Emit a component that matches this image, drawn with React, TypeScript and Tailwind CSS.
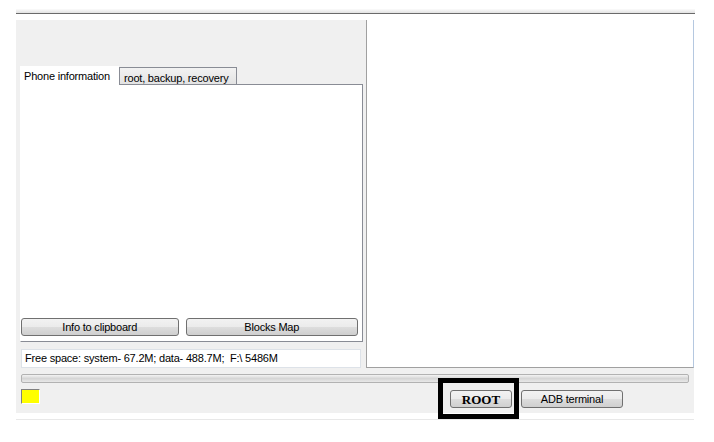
const sans = { fontFamily: '"Liberation Sans", Arial, sans-serif' };

function WinButton({ children, className = "", serif = false }: { children: React.ReactNode; className?: string; serif?: boolean }) {
  return (
    <button
      className={
        "h-[18px] flex items-center justify-center rounded-[3px] border border-[#707070] bg-[linear-gradient(to_bottom,#f2f2f2_0%,#ebebeb_50%,#dddddd_51%,#cfcfcf_100%)] text-black leading-none " +
        className
      }
      style={serif ? { fontFamily: '"Liberation Serif", "Times New Roman", serif' } : sans}
    >
      {children}
    </button>
  );
}

export default function App() {
  return (
    <div className="relative w-[714px] h-[442px] bg-white pt-[9px] pl-4 text-[11px] tracking-[-0.2px] text-black" style={sans}>
      {/* top separator */}
      <div className="w-[679px] h-[5px] bg-[linear-gradient(to_bottom,#fbfbfb,#e2e2e2)] border-b border-[#6a6a6a]" />

      <div className="mt-[6px] w-[678px] h-[393px] bg-[#f0f0f0] flex flex-col">
        <div className="flex h-[348px]">
          {/* left side */}
          <div className="w-[350px] flex flex-col pl-1 pt-[46px]">
            <div className="flex h-[18px] items-end">
              <div className="w-[99px] h-[19px] bg-white pl-1 pt-[2px] relative z-10 -mb-px">Phone information</div>
              <div className="w-[118px] h-[17px] border border-b-0 border-[#898c95] bg-[linear-gradient(to_bottom,#f2f2f2,#e3e3e3)] pl-[4px] pt-[2px]">
                root, backup, recovery
              </div>
            </div>
            <div className="w-[343px] h-[258px] bg-white border border-[#898c95] border-l-white flex flex-col justify-end pb-[5px] pl-0 pr-[4px]">
              <div className="flex gap-[7px]">
                <WinButton className="w-[158px]">Info to clipboard</WinButton>
                <WinButton className="w-[173px]">Blocks Map</WinButton>
              </div>
            </div>
            <div className="mt-[7px] ml-px w-[340px] h-[19px] bg-white border border-[#dde2e8] flex items-center pl-[3px]">
              Free space: system- 67.2M; data- 488.7M;&nbsp; F:\ 5486M
            </div>
          </div>

          {/* right text area */}
          <div className="flex-1 bg-white border-l border-[#a0a0a0] border-r border-r-[#b5c8e0] border-b border-b-[#a0a0a0]" />
        </div>

        {/* progress bar */}
        <div className="mt-[6px] ml-[5px] w-[668px] h-[9px] border border-[#b2b2b2] rounded-[2px] bg-[linear-gradient(to_bottom,#f3f3f3,#d6d6d6_50%,#e8e8e8)]" />

        {/* bottom bar */}
        <div className="flex items-start mt-[6px] ml-[5px]">
          <div className="w-[19px] h-[15px] bg-[#ffff00] border border-[#808080] border-r-white border-b-white" />
          <div className="ml-[410px] mt-px flex gap-[9px]">
            <WinButton serif className="w-[62px] font-bold text-[13px] tracking-normal">ROOT</WinButton>
            <WinButton className="w-[102px]">ADB terminal</WinButton>
          </div>
        </div>
      </div>

      <div className="mt-[6px] w-[678px] h-px bg-[#e8e8e8]" />

      {/* highlight annotation */}
      <div className="absolute left-[438px] top-[378px] w-[81px] h-[41px] border-[5px] border-black" />
    </div>
  );
}
